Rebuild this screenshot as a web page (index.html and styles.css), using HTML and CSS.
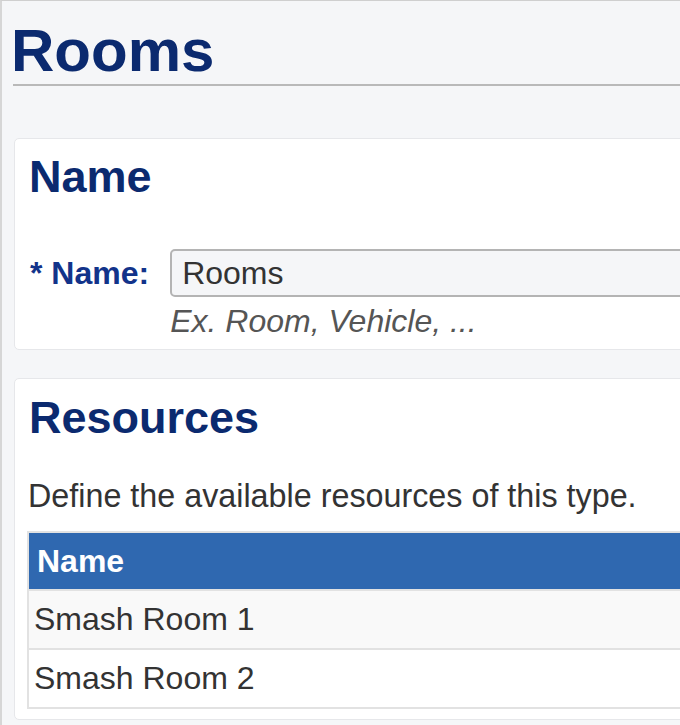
FILE: index.html
```html
<!DOCTYPE html>
<html lang="en">
<head>
<meta charset="utf-8">
<title>Rooms</title>
<link rel="stylesheet" href="styles.css">
</head>
<body>
<div class="page">
  <h1 class="page-title">Rooms</h1>

  <section class="card card-name">
    <h2 class="card-title">Name</h2>
    <div class="form-row">
      <label class="form-label" for="name">* Name:</label>
      <div class="form-field">
        <input class="text-input" id="name" type="text" value="Rooms">
        <div class="hint">Ex. Room, Vehicle, ...</div>
      </div>
    </div>
  </section>

  <section class="card card-resources">
    <h2 class="card-title">Resources</h2>
    <p class="intro">Define the available resources of this type.</p>
    <table class="res-table">
      <thead>
        <tr><th>Name</th></tr>
      </thead>
      <tbody>
        <tr class="odd"><td>Smash Room 1</td></tr>
        <tr class="even"><td>Smash Room 2</td></tr>
      </tbody>
    </table>
  </section>
</div>
</body>
</html>
```

FILE: styles.css
```css
html, body {
  margin: 0;
  padding: 0;
  background: #f5f6f8;
  overflow: hidden;
}

body {
  font-family: "Liberation Sans", Arial, sans-serif;
  font-size: 32px;
  color: #333;
}

.page {
  width: 1100px;
  min-height: 760px;
  border-top: 1px solid #cfcfcf;
  border-left: 2px solid #d6d6d6;
  padding-left: 11px;
  background: #f5f6f8;
}

.page-title {
  margin: 17px 0 0 0;
  font-size: 60px;
  line-height: 66px;
  font-weight: bold;
  color: #0b2a6f;
  text-indent: -2px;
  border-bottom: 2px solid #b9b9b9;
}

.card {
  margin-left: 1px;
  background: #fff;
  border: 1px solid #e6e7ea;
  border-radius: 5px;
  padding: 14px 14px 10px 14px;
}

.card-name {
  margin-top: 52px;
}

.card-resources {
  margin-top: 28px;
  padding-top: 15px;
}

.card-title {
  margin: 0;
  font-size: 45px;
  line-height: 48px;
  font-weight: bold;
  color: #0b2a6f;
}

.form-row {
  display: flex;
  align-items: flex-start;
  margin-top: 48px;
}

.form-label {
  font-weight: bold;
  color: #12338a;
  line-height: 36px;
  margin-top: 6px;
  margin-left: 1px;
  margin-right: 21px;
}

.form-field {
  flex: 1;
}

.text-input {
  display: block;
  box-sizing: border-box;
  width: 100%;
  height: 48px;
  margin: 0;
  padding: 0 10px;
  font-family: "Liberation Sans", Arial, sans-serif;
  font-size: 32px;
  color: #333;
  background: #f5f6f8;
  border: 2px solid #b4b4b4;
  border-radius: 5px;
  outline: none;
}

.hint {
  margin-top: 6px;
  font-style: italic;
  color: #555;
  line-height: 36px;
}

.intro {
  margin: 36px 0 0 -1px;
  line-height: 36px;
  font-size: 32.3px;
}

.res-table {
  margin-top: 17px;
  margin-left: -2px;
  width: 100%;
  border-collapse: collapse;
  border: 2px solid #e2e2e2;
}

.res-table th {
  text-align: left;
  background: #2f68b0;
  color: #fff;
  font-weight: bold;
  line-height: 36px;
  padding: 10px 8px 10px 8px;
}

.res-table td {
  line-height: 36px;
  padding: 10px 5px 11px 5px;
  border-top: 2px solid #e2e2e2;
}

.res-table tr.odd td {
  background: #f9f9f9;
}

.res-table tr.even td {
  background: #fff;
}
```
